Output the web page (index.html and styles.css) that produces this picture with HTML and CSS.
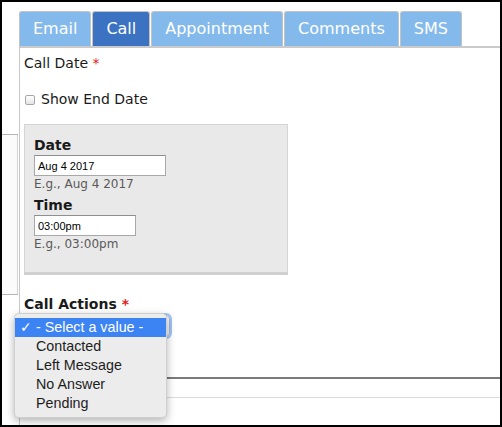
FILE: index.html
```html
<!DOCTYPE html>
<html>
<head>
<meta charset="utf-8">
<title>Call</title>
<link rel="stylesheet" href="styles.css">
</head>
<body>
<div class="frame">
  <div class="main">
    <ul class="tabs">
      <li class="tab">Email</li>
      <li class="tab active">Call</li>
      <li class="tab">Appointment</li>
      <li class="tab">Comments</li>
      <li class="tab">SMS</li>
    </ul>
    <div class="panel">
      <div class="field-label">Call Date <span class="req">*</span></div>
      <label class="check"><input type="checkbox" class="checkbox">Show End Date</label>
      <div class="datebox">
        <div class="sub-label">Date</div>
        <input class="input date-input" type="text" value="Aug 4 2017">
        <div class="hint">E.g., Aug 4 2017</div>
        <div class="sub-label time-label">Time</div>
        <input class="input time-input" type="text" value="03:00pm">
        <div class="hint">E.g., 03:00pm</div>
      </div>
      <div class="actions-label">Call Actions <span class="req">*</span></div>
      <div class="select-wrap">
        <div class="select"></div>
        <ul class="menu">
          <li class="item selected"><span class="tick">✓</span>- Select a value -</li>
          <li class="item">Contacted</li>
          <li class="item">Left Message</li>
          <li class="item">No Answer</li>
          <li class="item">Pending</li>
        </ul>
      </div>
      <div class="rule-dark"></div>
      <div class="rule-light"></div>
    </div>
  </div>
  <div class="gutter"><div class="gutter-line"></div></div>
</div>
</body>
</html>
```

FILE: styles.css
```css
body {
  margin: 0;
  background: #fff;
}

.frame {
  width: 502px;
  height: 427px;
  box-sizing: border-box;
  border: 2px solid #000;
  position: relative;
  overflow: hidden;
  font-family: "DejaVu Sans", Verdana, sans-serif;
  color: #222;
  background: #fff;
}

.main {
  margin: 9px 0 0 17px;
  height: calc(100% - 9px);
  display: flex;
  flex-direction: column;
}

.tabs {
  display: flex;
  list-style: none;
  margin: 0;
  padding: 0;
  height: 35px;
  flex: none;
}

.tab {
  box-sizing: border-box;
  height: 35px;
  padding: 0 13px;
  margin-right: 1px;
  border: 1px solid #c3c3c3;
  border-bottom: 0;
  border-radius: 3px 3px 0 0;
  background: #84b9ec;
  color: #fff;
  font-size: 16px;
  line-height: 34px;
}

.tab.active {
  background: #3b73c2;
}

.panel {
  flex: 1;
  border-top: 2px solid #cacaca;
  border-left: 1px solid #c8c8c8;
  padding: 6px 0 0 4px;
}

.field-label {
  font-size: 14px;
  line-height: 18px;
  color: #1a1a1a;
}

.req {
  color: #e21c1c;
}

.check {
  display: flex;
  align-items: flex-start;
  margin-top: 18px;
  font-size: 14px;
  line-height: 18px;
  color: #1a1a1a;
}

.checkbox {
  appearance: none;
  -webkit-appearance: none;
  box-sizing: border-box;
  width: 10px;
  height: 10px;
  margin: 5px 6px 0 1px;
  border: 1px solid #a6a6a6;
  border-radius: 2px;
  background: linear-gradient(#ffffff, #e4e4e4);
}

.datebox {
  box-sizing: border-box;
  width: 264px;
  height: 151px;
  margin-top: 16px;
  padding: 12px 9px 0 9px;
  background: #e9e9e9;
  border: 1px solid #d5d5d5;
  border-bottom: 3px solid #d0d0d0;
}

.sub-label {
  font-weight: bold;
  font-size: 14px;
  line-height: 17px;
  color: #1a1a1a;
}

.time-label {
  margin-top: 5px;
}

.input {
  display: block;
  box-sizing: border-box;
  height: 21px;
  margin: 1px 0 0 0;
  padding: 0 0 0 3px;
  border: 1px solid #a8a8a8;
  border-top-color: #8f8f8f;
  background: #fff;
  font-family: "Liberation Sans", Arial, sans-serif;
  font-size: 11px;
  color: #000;
  outline: none;
}

.date-input {
  width: 132px;
}

.time-input {
  width: 102px;
}

.hint {
  margin-top: 1px;
  font-size: 12px;
  line-height: 15px;
  color: #595959;
}

.actions-label {
  margin-top: 21px;
  font-weight: bold;
  font-size: 14px;
  line-height: 17px;
  color: #1a1a1a;
}

.select-wrap {
  position: relative;
  margin-top: 2px;
  width: 146px;
  height: 22px;
}

.select {
  box-sizing: border-box;
  width: 146px;
  height: 22px;
  border: 1px solid #9fb9e0;
  border-radius: 4px;
  background: linear-gradient(#fbfbfb, #ececec);
  box-shadow: 0 0 0 2px rgba(99, 155, 245, 0.6);
}

.menu {
  position: absolute;
  left: -10px;
  top: -2px;
  width: 153px;
  margin: 0;
  padding: 4px 0;
  list-style: none;
  box-sizing: border-box;
  background: #ececec;
  border: 1px solid rgba(0, 0, 0, 0.12);
  border-radius: 5px;
  box-shadow: 0 3px 8px rgba(0, 0, 0, 0.3);
  font-family: "Liberation Sans", Arial, sans-serif;
  font-size: 14.3px;
  color: #1c1c1c;
}

.item {
  position: relative;
  height: 19px;
  line-height: 19px;
  padding-left: 21px;
  white-space: nowrap;
}

.item.selected {
  background: #3c84f4;
  color: #fff;
}

.tick {
  position: absolute;
  left: 5px;
  top: 0;
  font-family: "DejaVu Sans", sans-serif;
  font-size: 14px;
}

.rule-dark {
  margin: 40px 0 0 -4px;
  height: 2px;
  background: #7a7a7a;
}

.rule-light {
  margin: 18px 0 0 -4px;
  height: 1px;
  background: #dcdcdc;
}

.gutter {
  position: absolute;
  left: -2px;
  top: 132px;
  width: 18px;
  height: 161px;
  box-sizing: border-box;
  background: #fbfbfb;
  border-top: 1px solid #b5b5b5;
  border-bottom: 1px solid #b5b5b5;
}

.gutter-line {
  position: absolute;
  right: 0;
  top: 0;
  bottom: 0;
  width: 1px;
  background: #d4d4d4;
}
```
